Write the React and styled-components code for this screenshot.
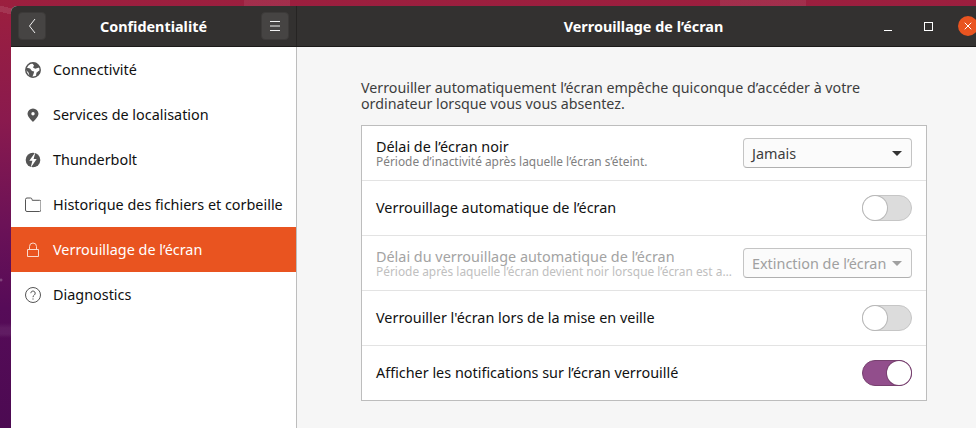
import React from 'react'
import styled, { createGlobalStyle } from 'styled-components'
import { X } from 'lucide-react'

const GlobalStyle = createGlobalStyle`
  html, body {
    margin: 0;
    padding: 0;
    height: 428px;
    overflow: hidden;
  }
  body {
    font-family: "Noto Sans", "Open Sans", sans-serif;
  }
`

const Desktop = styled.div`
  width: 976px;
  height: 428px;
  padding: 6px 0 0 11px;
  box-sizing: border-box;
  overflow: hidden;
  background:
    radial-gradient(circle at 1px 280px, rgba(255, 255, 255, 0.35) 0, rgba(255, 255, 255, 0) 2px),
    linear-gradient(14deg, rgba(255, 255, 255, 0) 0 404px, rgba(255, 255, 255, 0.1) 404px 410px, rgba(255, 255, 255, 0) 410px),
    linear-gradient(to bottom, rgba(255, 255, 255, 0) 323px, rgba(255, 255, 255, 0.07) 328px 334px, rgba(255, 255, 255, 0) 338px),
    linear-gradient(90deg, transparent 244px, rgba(255, 255, 255, 0.07) 244px 290px, transparent 290px 720px, rgba(255, 255, 255, 0.07) 720px 806px, transparent 806px),
    linear-gradient(180deg, #9c1f3e 0%, #8a1a4e 28%, #6c1257 52%, #560b58 72%, #4c0a52 100%);
`
const Window = styled.div`
  width: 965px;
  height: 422px;
  display: flex;
  flex-direction: column;
  background: #f6f6f6;
  border-radius: 6px 0 0 0;
  overflow: hidden;
`
const Header = styled.header`
  height: 41px;
  flex: none;
  display: flex;
  background: #333130;
  color: #fff;
  border-bottom: 1px solid #1c1a19;
  box-sizing: border-box;
`
const LeftHeader = styled.div`
  width: 286px;
  flex: none;
  display: flex;
  align-items: center;
  justify-content: space-between;
  padding: 0 7px;
  box-sizing: border-box;
  border-right: 1px solid #262423;
`
const RightHeader = styled.div`
  flex: 1;
  padding-left: 14px;
  display: flex;
  align-items: center;
  position: relative;
  justify-content: center;
`
const HeaderTitle = styled.div`
  font-size: 14.4px;
  font-weight: 700;
`
const HeaderButton = styled.button`
  width: 28px;
  height: 28px;
  padding: 0;
  display: flex;
  align-items: center;
  justify-content: center;
  background: #464443;
  border: 1px solid #3c3a39;
  border-radius: 4px;
  color: #f2f2f2;
`
const WindowControls = styled.div`
  position: absolute;
  right: -2px;
  top: 0;
  bottom: 0;
  display: flex;
  align-items: center;
`
const MinimizeGlyph = styled.span`
  width: 8px;
  height: 1px;
  margin: 8px 32px 0 0;
  background: #fff;
`
const MaximizeGlyph = styled.span`
  width: 7px;
  height: 7px;
  margin-right: 25px;
  border: 1px solid #fff;
`
const CloseButton = styled.span`
  width: 20px;
  height: 20px;
  border-radius: 50%;
  background: #e95420;
  display: flex;
  align-items: center;
  justify-content: center;
  color: #fff;
`
const Body = styled.div`
  flex: 1;
  display: flex;
  min-height: 0;
`
const Sidebar = styled.nav`
  width: 286px;
  flex: none;
  background: #fff;
  border-right: 1px solid #bdbdbd;
  box-sizing: border-box;
`
const NavRow = styled.div`
  height: 45px;
  display: flex;
  align-items: center;
  gap: 12px;
  padding-left: 14px;
  font-size: 14.4px;
  background: ${p => (p.$active ? '#e95420' : 'transparent')};
  color: ${p => (p.$active ? '#fff' : '#101010')};
  svg {
    flex: none;
    color: ${p => (p.$active ? '#fbd9cc' : '#555')};
  }
`
const Content = styled.main`
  flex: 1;
  padding: 33px 0 0 64px;
`
const Description = styled.p`
  margin: 0 0 13px;
  width: 566px;
  font-size: 14.25px;
  line-height: 16px;
  color: #3d3d3d;
`
const ListBox = styled.div`
  width: 566px;
  box-sizing: border-box;
  background: #fff;
  border: 1px solid #bdbdbd;
`
const ListRow = styled.div`
  height: 55px;
  box-sizing: border-box;
  padding: 0 14px;
  display: flex;
  align-items: center;
  justify-content: space-between;
  gap: 6px;
  &:first-child {
    height: 54px;
  }
  & + & {
    border-top: 1px solid #e3e3e3;
  }
`
const RowText = styled.div`
  flex: 1;
  min-width: 0;
  display: flex;
  flex-direction: column;
`
const RowTitle = styled.div`
  font-size: 14.4px;
  line-height: 16px;
  white-space: nowrap;
  color: ${p => (p.$disabled ? '#a3a3a3' : '#111')};
`
const RowHint = styled.div`
  margin: -2px 0 -1px;
  font-size: 11.9px;
  line-height: 16px;
  white-space: nowrap;
  overflow: hidden;
  text-overflow: ellipsis;
  color: ${p => (p.$disabled ? '#c0c0c0' : '#808080')};
`
const Select = styled.div`
  width: 169px;
  height: 30px;
  flex: none;
  box-sizing: border-box;
  padding: 0 9px 0 8px;
  display: flex;
  align-items: center;
  justify-content: space-between;
  font-size: 14.4px;
  white-space: nowrap;
  color: ${p => (p.$disabled ? '#a0a0a0' : '#3d3d3d')};
  background: #fbfbfb;
  border: 1px solid #c4c4c4;
  border-bottom-color: #b0b0b0;
  border-radius: 4px;
`
const Caret = styled.span`
  width: 0;
  height: 0;
  border-left: 5px solid transparent;
  border-right: 5px solid transparent;
  border-top: 5px solid ${p => (p.$disabled ? '#a0a0a0' : '#333')};
`
const Switch = styled.div`
  width: 50px;
  height: 26px;
  flex: none;
  box-sizing: border-box;
  display: flex;
  justify-content: ${p => (p.$on ? 'flex-end' : 'flex-start')};
  border-radius: 13px;
  background: ${p => (p.$on ? '#924e8c' : '#dcdcdc')};
  border: 1px solid ${p => (p.$on ? '#77406f' : '#c6c6c6')};
`
const Knob = styled.span`
  width: 24px;
  height: 24px;
  border-radius: 50%;
  background: #fff;
  box-shadow: 0 0 0 1px ${p => (p.$on ? '#77406f' : '#b8b8b8')};
`

const BackIcon = () => (
  <svg width="10" height="18" viewBox="0 0 10 18" fill="none" stroke="currentColor" strokeWidth="1">
    <path d="M8 2 L2.500 9 L8 16" />
  </svg>
)
const MenuIcon = () => (
  <svg width="12" height="10" viewBox="0 0 12 10" fill="none" stroke="currentColor" strokeWidth="1">
    <path d="M1 .5h10M1 5h10M1 9.500h10" />
  </svg>
)
const GlobeIcon = () => (
  <svg width="16" height="16" viewBox="0 0 16 16" fill="currentColor">
    <circle cx="8" cy="8" r="7.200" fill="none" stroke="currentColor" strokeWidth="1.500" />
    <path d="M1 5.500 5 6.500l2 2.500 2.200.6-.7 2.400L7 15.500 4.500 14 3.500 10.500 1 8z" />
    <path d="M7 1 9 3.500 8 5.500l2.200 1.300 4.600-1.500L12.500 2 10 .8z" />
    <path d="m11 13.500.5-2.800 2-1.700 1.700-.5-.5 3-2.200 2.500z" />
  </svg>
)
const PinIcon = () => (
  <svg width="16" height="16" viewBox="0 0 16 16" fill="currentColor">
    <path fillRule="evenodd" d="M8 1.500a5.500 5.500 0 0 0-5.500 5.300C2.500 10 8 15 8 15s5.500-5 5.500-8.200A5.500 5.500 0 0 0 8 1.500zm0 3.600a1.700 1.700 0 1 1 0 3.400 1.700 1.700 0 0 1 0-3.400z" />
  </svg>
)
const BoltIcon = () => (
  <svg width="16" height="16" viewBox="0 0 16 16">
    <circle cx="8" cy="8" r="7.300" fill="currentColor" />
    <path fill="#fff" d="M10.500 0 4.300 8.800H7.400L5.500 16l6.200-8.900H8.600z" />
  </svg>
)
const FolderIcon = () => (
  <svg width="16" height="16" viewBox="0 0 16 16" fill="none" stroke="currentColor" strokeWidth="1">
    <path d="M.5 4V2.500a1.500 1.500 0 0 1 1.500-1.500h3.500a1.500 1.500 0 0 1 1.500 1.300l.2 1h7.300a1.500 1.500 0 0 1 1.500 1.200V13a1.500 1.500 0 0 1-1.500 1.500H2A1.500 1.500 0 0 1 .5 13V4z" />
  </svg>
)
const LockIcon = () => (
  <svg width="16" height="16" viewBox="0 0 16 16" fill="none" stroke="currentColor" strokeWidth="1">
    <path d="M2.500 7.500h11v7h-11zM4.500 7.500V4.500a3.500 3.500 0 0 1 7 0v3" />
  </svg>
)
const HelpIcon = () => (
  <svg width="16" height="16" viewBox="0 0 16 16" fill="none" stroke="currentColor" strokeWidth="1">
    <circle cx="8" cy="8" r="7.500" />
    <path d="M5.800 6.200a2.200 2.200 0 1 1 3.500 1.800C8.500 8.600 8 9 8 10.200" />
    <path d="M8 11.400v1.200" />
  </svg>
)

const navItems = [
  { label: 'Connectivité', icon: <GlobeIcon /> },
  { label: 'Services de localisation', icon: <PinIcon /> },
  { label: 'Thunderbolt', icon: <BoltIcon /> },
  { label: 'Historique des fichiers et corbeille', icon: <FolderIcon /> },
  { label: 'Verrouillage de l’écran', icon: <LockIcon />, active: true },
  { label: 'Diagnostics', icon: <HelpIcon /> },
]

export default function App() {
  return (
    <Desktop>
      <GlobalStyle />
      <Window>
        <Header>
          <LeftHeader>
            <HeaderButton><BackIcon /></HeaderButton>
            <HeaderTitle>Confidentialité</HeaderTitle>
            <HeaderButton><MenuIcon /></HeaderButton>
          </LeftHeader>
          <RightHeader>
            <HeaderTitle>Verrouillage de l’écran</HeaderTitle>
            <WindowControls>
              <MinimizeGlyph />
              <MaximizeGlyph />
              <CloseButton><X size={12} strokeWidth={2} /></CloseButton>
            </WindowControls>
          </RightHeader>
        </Header>
        <Body>
          <Sidebar>
            {navItems.map(item => (
              <NavRow key={item.label} $active={item.active}>
                {item.icon}
                {item.label}
              </NavRow>
            ))}
          </Sidebar>
          <Content>
            <Description>
              Verrouiller automatiquement l’écran empêche quiconque d’accéder à votre ordinateur lorsque vous vous absentez.
            </Description>
            <ListBox>
              <ListRow>
                <RowText>
                  <RowTitle>Délai de l’écran noir</RowTitle>
                  <RowHint>Période d’inactivité après laquelle l’écran s’éteint.</RowHint>
                </RowText>
                <Select>Jamais<Caret /></Select>
              </ListRow>
              <ListRow>
                <RowTitle>Verrouillage automatique de l’écran</RowTitle>
                <Switch><Knob /></Switch>
              </ListRow>
              <ListRow>
                <RowText>
                  <RowTitle $disabled>Délai du verrouillage automatique de l’écran</RowTitle>
                  <RowHint $disabled>Période après laquelle l’écran devient noir lorsque l’écran est automatiquement verrouillé</RowHint>
                </RowText>
                <Select $disabled>Extinction de l’écran<Caret $disabled /></Select>
              </ListRow>
              <ListRow>
                <RowTitle>Verrouiller l'écran lors de la mise en veille</RowTitle>
                <Switch><Knob /></Switch>
              </ListRow>
              <ListRow>
                <RowTitle>Afficher les notifications sur l’écran verrouillé</RowTitle>
                <Switch $on><Knob $on /></Switch>
              </ListRow>
            </ListBox>
          </Content>
        </Body>
      </Window>
    </Desktop>
  )
}
